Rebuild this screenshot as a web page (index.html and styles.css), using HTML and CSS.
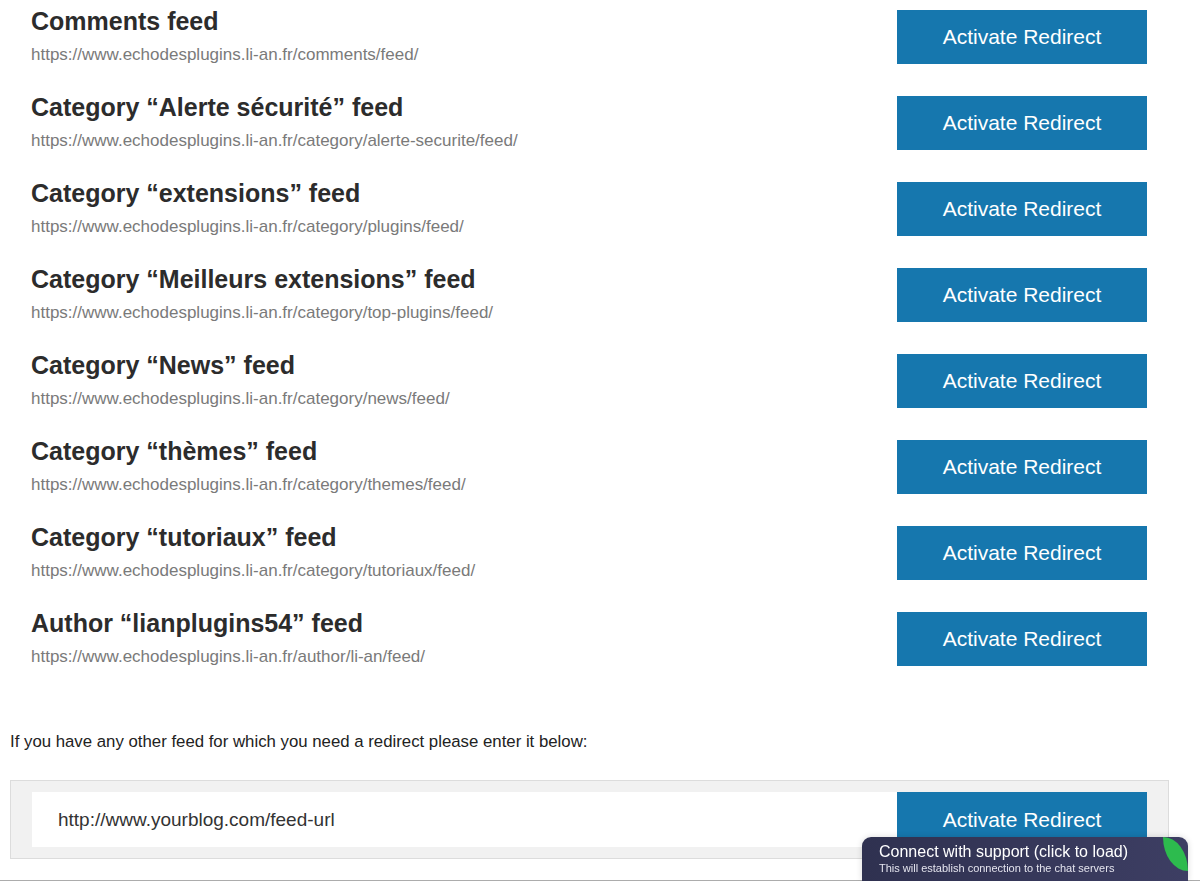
FILE: index.html
```html
<!DOCTYPE html>
<html lang="fr">
<head>
  <meta charset="UTF-8" />
  <meta name="viewport" content="width=device-width, initial-scale=1.0"/>
  <title>Feed redirects</title>
  <link rel="stylesheet" href="styles.css">
</head>
<body>
  <div class="feeds">
    <div class="feed-row">
      <div class="feed-info">
        <h2>Comments feed</h2>
        <div class="feed-url">https://www.echodesplugins.li-an.fr/comments/feed/</div>
      </div>
      <button class="btn">Activate Redirect</button>
    </div>
    <div class="feed-row">
      <div class="feed-info">
        <h2>Category “Alerte sécurité” feed</h2>
        <div class="feed-url">https://www.echodesplugins.li-an.fr/category/alerte-securite/feed/</div>
      </div>
      <button class="btn">Activate Redirect</button>
    </div>
    <div class="feed-row">
      <div class="feed-info">
        <h2>Category “extensions” feed</h2>
        <div class="feed-url">https://www.echodesplugins.li-an.fr/category/plugins/feed/</div>
      </div>
      <button class="btn">Activate Redirect</button>
    </div>
    <div class="feed-row">
      <div class="feed-info">
        <h2>Category “Meilleurs extensions” feed</h2>
        <div class="feed-url">https://www.echodesplugins.li-an.fr/category/top-plugins/feed/</div>
      </div>
      <button class="btn">Activate Redirect</button>
    </div>
    <div class="feed-row">
      <div class="feed-info">
        <h2>Category “News” feed</h2>
        <div class="feed-url">https://www.echodesplugins.li-an.fr/category/news/feed/</div>
      </div>
      <button class="btn">Activate Redirect</button>
    </div>
    <div class="feed-row">
      <div class="feed-info">
        <h2>Category “thèmes” feed</h2>
        <div class="feed-url">https://www.echodesplugins.li-an.fr/category/themes/feed/</div>
      </div>
      <button class="btn">Activate Redirect</button>
    </div>
    <div class="feed-row">
      <div class="feed-info">
        <h2>Category “tutoriaux” feed</h2>
        <div class="feed-url">https://www.echodesplugins.li-an.fr/category/tutoriaux/feed/</div>
      </div>
      <button class="btn">Activate Redirect</button>
    </div>
    <div class="feed-row">
      <div class="feed-info">
        <h2>Author “lianplugins54” feed</h2>
        <div class="feed-url">https://www.echodesplugins.li-an.fr/author/li-an/feed/</div>
      </div>
      <button class="btn">Activate Redirect</button>
    </div>
  </div>

  <p class="other-note">If you have any other feed for which you need a redirect please enter it below:</p>

  <div class="custom-box">
    <input class="custom-input" type="text" value="http://www.yourblog.com/feed-url">
    <button class="btn">Activate Redirect</button>
  </div>

  <div class="page-end"></div>

  <!-- chat widget -->
  <div class="chat">
    <div class="chat-title">Connect with support (click to load)</div>
    <div class="chat-sub">This will establish connection to the chat servers</div>
    <span class="chat-leaf"></span>
  </div>
</body>
</html>
```

FILE: styles.css
```css
body {
  margin: 0;
  font-family: "Liberation Sans", Arial, sans-serif;
  background: #fff;
  color: #333;
  overflow: hidden;
}

.feeds {
  padding: 0 53px 0 31px;
}

.feed-row {
  display: flex;
  justify-content: space-between;
  align-items: flex-start;
  height: 86px;
  padding-top: 6px;
  box-sizing: border-box;
}

.feed-info h2 {
  margin: 0 0 7px;
  font-size: 25px;
  line-height: 30px;
  font-weight: bold;
  color: #2c2c2c;
}

.feed-url {
  font-size: 17px;
  line-height: 24px;
  color: #7a7a7a;
}

.btn {
  width: 250px;
  height: 54px;
  margin-top: 4px;
  border: 0;
  background: #1677ae;
  color: #fff;
  font-family: inherit;
  font-size: 21px;
  cursor: pointer;
}

.other-note {
  margin: 42px 0 0 10px;
  font-size: 16.8px;
  line-height: 24px;
  color: #222;
}

.custom-box {
  display: flex;
  margin: 26px 31px 0 10px;
  padding: 11px 21px 11px 21px;
  background: #f1f1f1;
  border: 1px solid #dcdcdc;
}

.custom-input {
  flex: 1;
  height: 55px;
  border: 0;
  padding: 0 0 0 26px;
  margin: 0;
  background: #fff;
  font-family: inherit;
  font-size: 19px;
  color: #333;
  outline: none;
}

.custom-box .btn {
  margin-top: 0;
  height: 55px;
}

.page-end {
  margin-top: 21px;
  border-top: 2px solid #acacac;
  height: 40px;
}

.chat {
  position: fixed;
  right: 12px;
  bottom: 0;
  width: 326px;
  height: 44px;
  box-sizing: border-box;
  padding: 5px 0 0 17px;
  border-radius: 9px 9px 0 0;
  background: linear-gradient(90deg, #2f3150, #3d3e63);
  color: #fff;
  overflow: hidden;
  box-shadow: 0 0 6px rgba(0, 0, 0, 0.15);
}

.chat-title {
  font-size: 16px;
  line-height: 19px;
}

.chat-sub {
  font-size: 11px;
  line-height: 14px;
  color: #e4e4ee;
}

.chat-leaf {
  position: absolute;
  top: 0;
  right: 0;
  width: 25px;
  height: 34px;
  background: #2dbb4e;
  border-radius: 0 100% 0 100%;
}
```
